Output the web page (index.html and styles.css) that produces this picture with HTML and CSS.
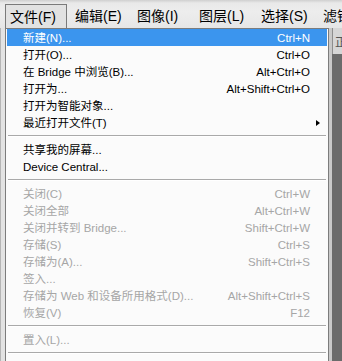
FILE: index.html
```html
<!DOCTYPE html>
<html>
<head>
<meta charset="utf-8">
<link rel="stylesheet" href="styles.css">
</head>
<body>
<div class="menubar">
  <div class="mb-item active">文件(F)</div>
  <div class="mb-item">编辑(E)</div>
  <div class="mb-item">图像(I)</div>
  <div class="mb-item">图层(L)</div>
  <div class="mb-item">选择(S)</div>
  <div class="mb-item">滤镜(T)</div>
</div>
<div class="below">
  <div class="left-strip"></div>
  <div class="menu">
    <div class="row hl"><span>新建(N)...</span><span>Ctrl+N</span></div>
    <div class="row"><span>打开(O)...</span><span>Ctrl+O</span></div>
    <div class="row"><span>在 Bridge 中浏览(B)...</span><span>Alt+Ctrl+O</span></div>
    <div class="row"><span>打开为...</span><span>Alt+Shift+Ctrl+O</span></div>
    <div class="row"><span>打开为智能对象...</span><span></span></div>
    <div class="row sub"><span>最近打开文件(T)</span><span></span><i class="arrow"></i></div>
    <div class="sep"></div>
    <div class="row"><span>共享我的屏幕...</span><span></span></div>
    <div class="row"><span>Device Central...</span><span></span></div>
    <div class="sep"></div>
    <div class="row dis"><span>关闭(C)</span><span>Ctrl+W</span></div>
    <div class="row dis"><span>关闭全部</span><span>Alt+Ctrl+W</span></div>
    <div class="row dis"><span>关闭并转到 Bridge...</span><span>Shift+Ctrl+W</span></div>
    <div class="row dis"><span>存储(S)</span><span>Ctrl+S</span></div>
    <div class="row dis"><span>存储为(A)...</span><span>Shift+Ctrl+S</span></div>
    <div class="row dis"><span>签入...</span><span></span></div>
    <div class="row dis"><span>存储为 Web 和设备所用格式(D)...</span><span>Alt+Shift+Ctrl+S</span></div>
    <div class="row dis"><span>恢复(V)</span><span>F12</span></div>
    <div class="sep"></div>
    <div class="row dis"><span>置入(L)...</span><span></span></div>
    <div class="sep"></div>
    <div class="row sub"><span>导入(M)</span><span></span><i class="arrow"></i></div>
  </div>
  <div class="right-area">
    <div class="r-strip"></div>
    <div class="r-main">
      <div class="r-panel"><span>正</span></div>
      <div class="r-dark"></div>
    </div>
  </div>
</div>
</body>
</html>
```

FILE: styles.css
```css
html, body {
  margin: 0;
  padding: 0;
}
body {
  width: 342px;
  height: 361px;
  overflow: hidden;
  background: #6b6b6b;
  font-family: "Liberation Sans", "Noto Sans CJK SC", sans-serif;
}
.menubar {
  height: 28px;
  display: flex;
  padding-left: 5px;
  background: linear-gradient(#cfcfcf 0, #e9e9e9 3px, #ededed 12px, #e6e6e6 28px);
  box-sizing: border-box;
  padding-top: 4px;
  white-space: nowrap;
  overflow: hidden;
}
.mb-item {
  width: 62px;
  flex: none;
  box-sizing: border-box;
  padding-left: 8px;
  font-size: 14px;
  line-height: 25px;
  color: #000;
}
.mb-item.active {
  padding-left: 4px;
  border: 1px solid #7a7a7a;
  border-bottom: none;
  background: #e2e2e2;
  line-height: 24px;
}
.below {
  display: flex;
  height: 333px;
}
.left-strip {
  width: 5px;
  flex: none;
  background: #e3e3e3;
  box-shadow: inset 1px 0 0 #b5b5b5;
}
.menu {
  width: 324px;
  flex: none;
  box-sizing: border-box;
  border: 1px solid #7c7c7c;
  border-bottom: none;
  padding: 0 1px;
  background: #fbfbfb;
  font-size: 11.5px;
  overflow: hidden;
}
.row {
  position: relative;
  display: flex;
  justify-content: space-between;
  height: 17px;
  line-height: 19px;
  padding: 0 17px 0 16px;
  color: #000;
  white-space: nowrap;
}
.row.hl {
  background: #3b95ee;
  color: #fff;
}
.row.dis {
  color: #a6a6a6;
}
.arrow {
  position: absolute;
  right: 7px;
  top: 6px;
  width: 0;
  height: 0;
  border-top: 3.5px solid transparent;
  border-bottom: 3.5px solid transparent;
  border-left: 4px solid #000;
}
.sep {
  height: 10px;
  margin: 0 1px 0 1px;
  box-sizing: border-box;
  padding-top: 4px;
}
.sep::before {
  content: "";
  display: block;
  height: 1px;
  background: #a9a9a9;
  border-bottom: 1px solid #ffffff;
}
.right-area {
  flex: 1;
  display: flex;
}
.r-strip {
  width: 3px;
  background: #c9c9c9;
}
.r-main {
  flex: 1;
  display: flex;
  flex-direction: column;
}
.r-panel {
  height: 26px;
  background: #d6d6d6;
  border-left: 1px solid #8e8e8e;
  box-sizing: border-box;
  padding-top: 5px;
  padding-left: 2px;
  font-size: 12px;
  color: #555;
  overflow: hidden;
  white-space: nowrap;
}
.r-dark {
  flex: 1;
  background: #6b6b6b;
}
```
